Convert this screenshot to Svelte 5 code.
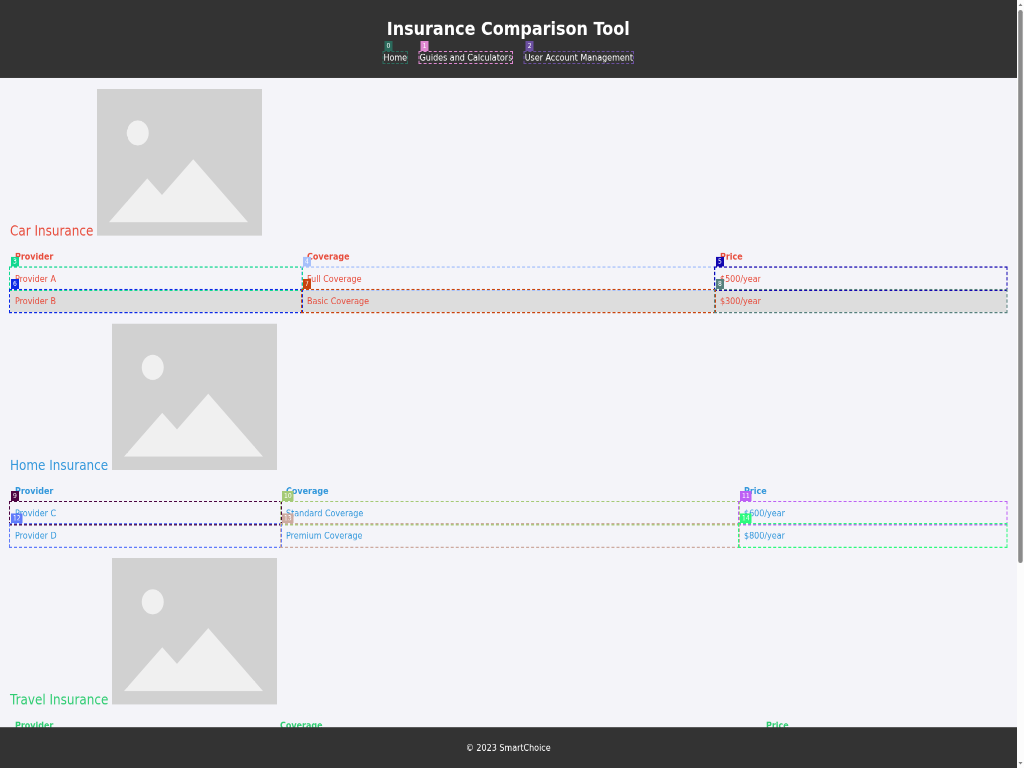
<script>
  const links = [
    { text: 'Home', color: '#2b6a5c' },
    { text: 'Guides and Calculators', color: '#e088d2' },
    { text: 'User Account Management', color: '#6b4fa0' },
  ];

  const sections = [
    {
      title: 'Car Insurance', tone: 'red', columns: [584, 826, 583], striped: true,
      rows: [
        [['Provider A', 3, '#10d890'], ['Full Coverage', 4, '#a6c0fb'], ['$500/year', 5, '#1206b0']],
        [['Provider B', 6, '#0a28e6'], ['Basic Coverage', 7, '#c9430d'], ['$300/year', 8, '#56807d']],
      ],
    },
    {
      title: 'Home Insurance', tone: 'blue', columns: [542, 916, 535],
      rows: [
        [['Provider C', 9, '#4d0442'], ['Standard Coverage', 10, '#a5ca76'], ['$600/year', 11, '#bd60f5']],
        [['Provider D', 12, '#607bfa'], ['Premium Coverage', 13, '#cdaaa0'], ['$800/year', 14, '#2cfa7d']],
      ],
    },
    { title: 'Travel Insurance', tone: 'green', columns: [530, 972, 491], rows: [] },
  ];
</script>

<div class="window">
  <div class="page">
    <header>
      <h1>Insurance Comparison Tool</h1>
      <nav>
        {#each links as link, i}
          <a href="#top">{link.text}<span class="mark" style="--c: {link.color}"><b>{i}</b></span></a>
        {/each}
      </nav>
    </header>

    <main>
      {#each sections as section}
        <section class={section.tone}>
          <div class="heading">
            <h2>{section.title}</h2>
            <svg width="330" height="256" viewBox="0 0 330 256">
              <rect width="330" height="256" fill="#d1d1d1" />
              <circle cx="81.500" cy="76.500" r="22" fill="#f0f0f0" />
              <path d="M24 232.500 L100.5 156 L130 185 L192.500 122.500 L302 232.500 Z" fill="#f0f0f0" />
            </svg>
          </div>
          <table>
            <colgroup>
              {#each section.columns as width}<col style="width: {width}px" />{/each}
            </colgroup>
            <thead>
              <tr><th>Provider</th><th>Coverage</th><th>Price</th></tr>
            </thead>
            <tbody class:striped={section.striped}>
              {#each section.rows as row}
                <tr>
                  {#each row as [text, id, color]}
                    <td>{text}<span class="mark" style="--c: {color}"><b>{id}</b></span></td>
                  {/each}
                </tr>
              {/each}
            </tbody>
          </table>
        </section>
      {/each}
    </main>

    <footer>© 2023 SmartChoice</footer>
  </div>

  <div class="scrollbar">
    <svg width="7" height="768" viewBox="0 0 7 768">
      <path d="M1.500 6 L3.500 3.500 L5.500 6 Z M1.500 762 L3.500 764.500 L5.500 762 Z" fill="#858585" />
      <rect x="1.200" y="10" width="4.500" height="553" rx="2.250" fill="#8b8b8b" />
    </svg>
  </div>
</div>

<style>
  :global(body) { margin: 0; overflow: hidden; }
  .window {
    display: flex;
    width: 1024px;
    height: 768px;
    overflow: hidden;
    background: #fcfcfc;
  }
  .page {
    display: grid;
    grid-template-rows: 136px 1136px 71px;
    flex: 0 0 2033px;
    width: 2033px;
    height: 1343px;
    margin-right: -1016.5px;
    transform: scale(0.5, 0.5718);
    transform-origin: 0 0;
    will-change: transform;
    background: #f4f4f9;
    font: 16px/19px "DejaVu Sans", sans-serif;
  }
  header {
    box-sizing: border-box;
    padding-top: 32px;
    background: #333;
    color: #fff;
    text-align: center;
  }
  h1 { margin: 0; font-size: 32px; line-height: 37px; }
  nav { display: flex; justify-content: center; gap: 25px; margin-top: 22px; }
  a { position: relative; color: #fff; text-decoration: none; }
  main { box-sizing: border-box; padding: 20px 20px 0; overflow: hidden; }
  section { margin-bottom: 20px; }
  .red { color: #e74c3c; }
  .blue { color: #3498db; }
  .green { color: #2ecc71; }
  .heading {
    display: flex;
    align-items: baseline;
    gap: 7.6px;
    height: 273px;
  }
  h2 { margin: 0; font-size: 24px; line-height: 28px; font-weight: 400; }
  table {
    width: 1993px;
    table-layout: fixed;
    border-collapse: separate;
    border-spacing: 0;
  }
  th, td { position: relative; height: 19px; padding: 10px; text-align: left; }
  .striped tr:nth-child(even) { background: #ddd; }
  .mark { position: absolute; inset: -2px; border: 2px dashed var(--c); }
  .mark b {
    position: absolute;
    left: 2px;
    top: -19px;
    height: 17px;
    padding: 0 4px;
    background: var(--c);
    color: #fff;
    font-size: 12px;
    font-weight: 400;
    line-height: 17px;
  }
  footer {
    display: grid;
    place-items: center;
    background: #333;
    color: #fff;
  }
  .scrollbar { position: relative; flex: none; width: 7.5px; }
  .scrollbar svg { display: block; }
</style>
